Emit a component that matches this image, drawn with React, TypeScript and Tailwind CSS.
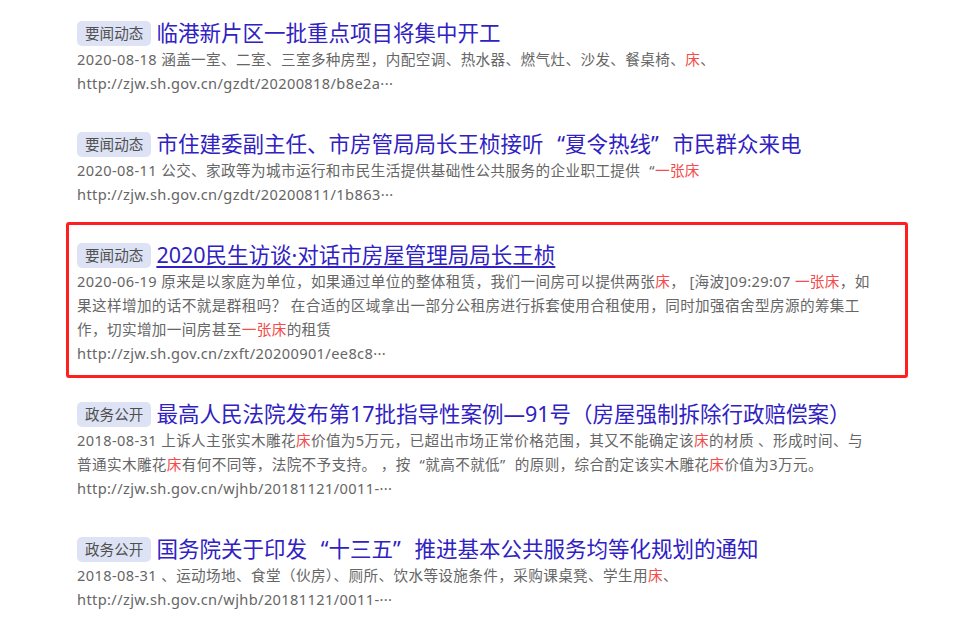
import React from 'react';

type Seg = string | { hl: string };

type Result = {
  tag: string;
  title: string;
  underline?: boolean;
  boxed?: boolean;
  lines: Seg[][];
  url: string;
};

const results: Result[] = [
  {
    tag: '要闻动态',
    title: '临港新片区一批重点项目将集中开工',
    lines: [['2020-08-18 涵盖一室、二室、三室多种房型，内配空调、热水器、燃气灶、沙发、餐桌椅、', { hl: '床' }, '、']],
    url: 'http://zjw.sh.gov.cn/gzdt/20200818/b8e2a···',
  },
  {
    tag: '要闻动态',
    title: '市住建委副主任、市房管局局长王桢接听“夏令热线”市民群众来电',
    lines: [['2020-08-11 公交、家政等为城市运行和市民生活提供基础性公共服务的企业职工提供“', { hl: '一张床' }]],
    url: 'http://zjw.sh.gov.cn/gzdt/20200811/1b863···',
  },
  {
    tag: '要闻动态',
    title: '2020民生访谈·对话市房屋管理局局长王桢',
    underline: true,
    boxed: true,
    lines: [
      ['2020-06-19 原来是以家庭为单位，如果通过单位的整体租赁，我们一间房可以提供两张', { hl: '床' }, '， [海波]09:29:07 ', { hl: '一张床' }, '，如'],
      ['果这样增加的话不就是群租吗？ 在合适的区域拿出一部分公租房进行拆套使用合租使用，同时加强宿舍型房源的筹集工'],
      ['作，切实增加一间房甚至', { hl: '一张床' }, '的租赁'],
    ],
    url: 'http://zjw.sh.gov.cn/zxft/20200901/ee8c8···',
  },
  {
    tag: '政务公开',
    title: '最高人民法院发布第17批指导性案例—91号（房屋强制拆除行政赔偿案）',
    lines: [
      ['2018-08-31 上诉人主张实木雕花', { hl: '床' }, '价值为5万元，已超出市场正常价格范围，其又不能确定该', { hl: '床' }, '的材质 、形成时间、与'],
      ['普通实木雕花', { hl: '床' }, '有何不同等，法院不予支持。 ，按“就高不就低”的原则，综合酌定该实木雕花', { hl: '床' }, '价值为3万元。'],
    ],
    url: 'http://zjw.sh.gov.cn/wjhb/20181121/0011-···',
  },
  {
    tag: '政务公开',
    title: '国务院关于印发“十三五”推进基本公共服务均等化规划的通知',
    lines: [['2018-08-31 、运动场地、食堂（伙房）、厕所、饮水等设施条件，采购课桌凳、学生用', { hl: '床' }, '、']],
    url: 'http://zjw.sh.gov.cn/wjhb/20181121/0011-···',
  },
];

// full-width CJK quotes: the Latin face draws them narrow
function withQuotes(s: string) {
  return s.split(/([“”—])/).map((p, i) => {
    if (p === '“') return <span key={i} className="inline-block w-[1em] text-right">“</span>;
    if (p === '”') return <span key={i} className="inline-block w-[1em] text-left">”</span>;
    if (p === '—') return <span key={i} className="inline-block w-[1em] text-center">—</span>;
    return <React.Fragment key={i}>{p}</React.Fragment>;
  });
}

function ResultItem({ r }: { r: Result }) {
  return (
    <div
      className={`rounded-[3px] border-[3px] pl-[8px] pr-[20px] pt-[16px] pb-[10px] ${
        r.boxed ? 'border-[#ff1f1f]' : 'border-transparent'
      }`}
    >
      <div className="flex items-center gap-[5px] h-[28px]">
        <span className="rounded-[5px] bg-[#dde3f4] px-[8px] h-[25px] leading-[25px] text-[14.6px] text-[#505050]">
          {r.tag}
        </span>
        <a
          className={`text-[21.5px] leading-[28px] text-[#3022c2] whitespace-nowrap ${
            r.underline ? 'underline underline-offset-[3px] decoration-[1.5px]' : ''
          }`}
        >
          {withQuotes(r.title)}
        </a>
      </div>
      <div className="text-[14.6px] leading-[24px] tracking-[0.38px] text-[#666]">
        {r.lines.map((line, i) => (
          <div key={i} className="whitespace-nowrap">
            {line.map((seg, j) =>
              typeof seg === 'string' ? (
                <span key={j}>{withQuotes(seg)}</span>
              ) : (
                <span key={j} className="text-[#f44c4c]">
                  {seg.hl}
                </span>
              )
            )}
          </div>
        ))}
        <div className="whitespace-nowrap">{r.url}</div>
      </div>
    </div>
  );
}

export default function App() {
  return (
    <div
      className="min-h-[633px] w-[960px] bg-white pl-[66px]"
      style={{ fontFamily: '"Noto Sans", "Noto Sans CJK SC", sans-serif' }}
    >
      <div className="flex w-[842px] flex-col gap-[3px]">
        {results.map((r, i) => (
          <ResultItem key={i} r={r} />
        ))}
      </div>
    </div>
  );
}
